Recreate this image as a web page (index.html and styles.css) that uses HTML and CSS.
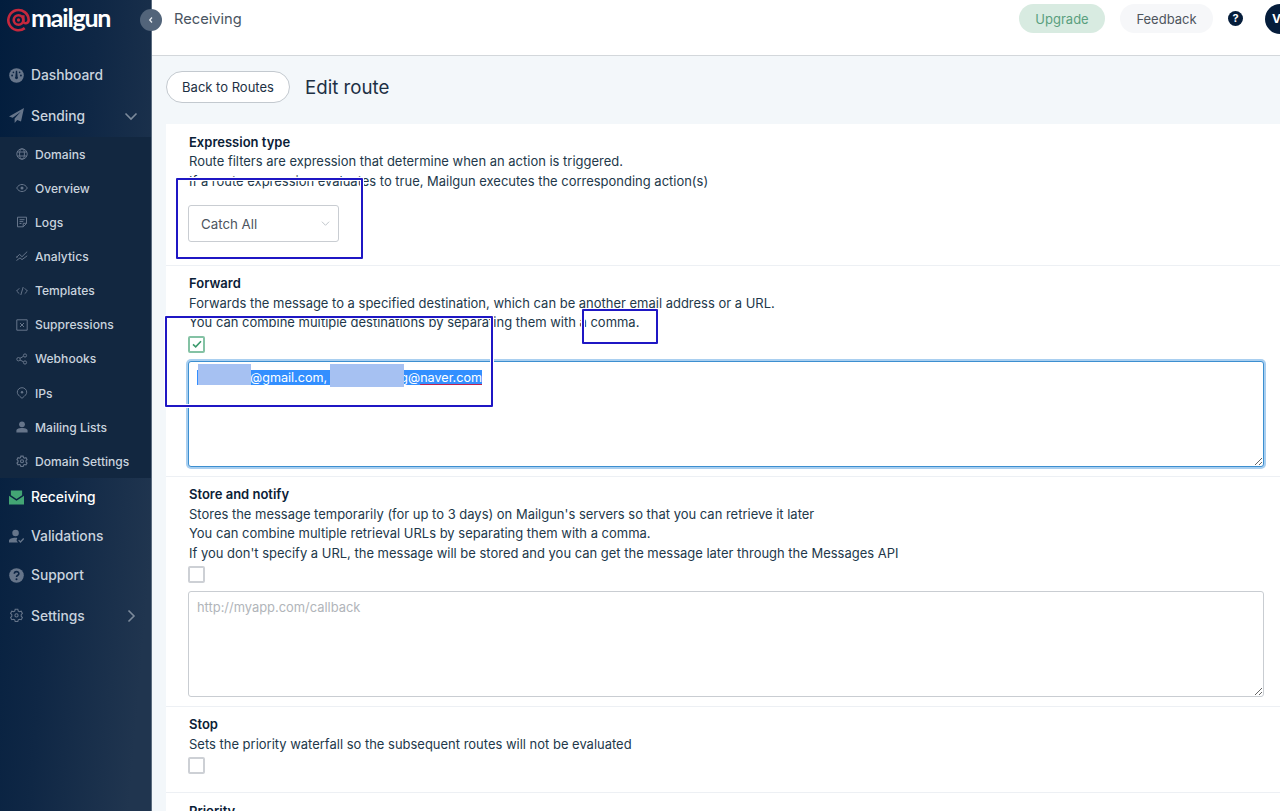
FILE: index.html
```html
<!DOCTYPE html>
<html lang="en">
<head>
    <meta charset="UTF-8">
    <meta name="viewport" content="width=device-width, initial-scale=1.0">
    <title>Mailgun - Edit route</title>
    <link rel="stylesheet" href="styles.css">
</head>
<body>
    <div class="app">
        <aside class="sidebar">
            <div class="logo">
                <svg class="logo-mark" viewBox="0 0 24 24" fill="none" stroke="#c5283d" stroke-width="2.7">
                    <circle cx="12" cy="12" r="5"/>
                    <path d="M17 7v6c0 3.5 5.6 3 5.6-1A10.6 10.6 0 1 0 18.5 20.5"/>
                    <circle cx="12" cy="12" r="1.7" fill="#c5283d" stroke="none"/>
                </svg>
                <span class="logo-text">mailgun</span>
            </div>
            <button class="collapse">
                <svg viewBox="0 0 8 8" fill="none" stroke="#e8edf2" stroke-width="1.3"><path d="M5 1.5 2.7 4 5 6.5"/></svg>
            </button>

            <nav>
                <a class="nav-item">
                    <svg class="icon" viewBox="0 0 16 16"><circle cx="8" cy="8" r="7.8" fill="#66758a"/><g fill="#0c2443"><path d="M7.3 3h1.4l.5 6.2a1.6 1.6 0 1 1-2.4 0z"/><circle cx="3.3" cy="8" r="1"/><circle cx="12.7" cy="8" r="1"/><circle cx="4.7" cy="4.6" r=".9"/><circle cx="11.3" cy="4.6" r=".9"/></g></svg>
                    Dashboard
                </a>
                <a class="nav-item tall">
                    <svg class="icon" viewBox="0 0 16 16" fill="#66758a"><path d="M16 0 0 9l4 1.5L12.5 4 6 11.3V16l2.8-3.2 4 1.7z"/></svg>
                    Sending
                    <svg class="chevron" viewBox="0 0 14 14"><path d="m1.5 4.5 5.5 5.5 5.5-5.5"/></svg>
                </a>
                <div class="submenu">
                    <a class="sub-item"><svg class="sub-icon" viewBox="0 0 12 12"><circle cx="6" cy="6" r="5.2"/><ellipse cx="6" cy="6" rx="2.4" ry="5.2"/><path d="M1.2 4h9.6M1.2 8h9.6"/></svg>Domains</a>
                    <a class="sub-item"><svg class="sub-icon" viewBox="0 0 12 12"><path d="M.7 6C3.2 1.3 8.8 1.3 11.3 6 8.8 10.7 3.2 10.7.7 6z"/><circle class="solid" cx="6" cy="6" r="1.5"/></svg>Overview</a>
                    <a class="sub-item"><svg class="sub-icon" viewBox="0 0 12 12"><path d="M1.5 1.2h9v6.3l-3.3 3.3H1.5zM10.5 7.3H7.2v3.5M3.5 3.7h5M3.5 5.6h3.8M3.5 7.5h2"/></svg>Logs</a>
                    <a class="sub-item"><svg class="sub-icon" viewBox="0 0 12 12"><path d="m.5 7.3 3.2-3 2.2 2.5 5.3-5.2M.5 10.5l3.5-2.6 2 1.7 5.2-3.8"/><circle class="solid" cx="1" cy="7" r=".8"/></svg>Analytics</a>
                    <a class="sub-item"><svg class="sub-icon" viewBox="0 0 12 12"><path d="M3.3 3.3.6 6l2.7 2.7M8.7 3.3 11.4 6 8.7 8.7M7.2 2 4.8 10"/></svg>Templates</a>
                    <a class="sub-item"><svg class="sub-icon" viewBox="0 0 12 12"><path d="M.8.8h10.4v10.4H.8zM4 4l4 4M8 4 4 8"/></svg>Suppressions</a>
                    <a class="sub-item"><svg class="sub-icon" viewBox="0 0 12 12"><circle cx="2.5" cy="6.2" r="1.7"/><circle cx="9" cy="2.5" r="1.6"/><circle cx="9" cy="9.5" r="1.6"/><path d="m4 5.3 3.5-2M4 7l3.5 1.8"/></svg>Webhooks</a>
                    <a class="sub-item"><svg class="sub-icon" viewBox="0 0 12 12"><path d="M6 11.3C2.7 8.6 1.3 7.2 1.3 5.2a4.7 4.5 0 0 1 9.4 0c0 2-1.4 3.4-4.7 6.1z"/><circle class="solid" cx="6" cy="5.2" r="1.2"/></svg>IPs</a>
                    <a class="sub-item"><svg class="sub-icon" viewBox="0 0 12 12"><path class="solid" d="M.4 11.5V9.7c0-2 2.5-2.8 5.6-2.8s5.6.8 5.6 2.8v1.8z"/><circle class="solid" cx="6" cy="3.3" r="2.9"/></svg>Mailing Lists</a>
                    <a class="sub-item"><svg class="sub-icon gear" viewBox="0 0 16 16"><path d="m6.5 1.5-.5 2-1.3.7-2-.6-1.4 2.5 1.4 1.5v1.7L1.3 10.8l1.4 2.4 2-.5 1.3.7.5 2h3l.5-2 1.3-.7 2 .5 1.4-2.4-1.4-1.5V7.6l1.4-1.5-1.4-2.5-2 .6-1.3-.7-.5-2z"/><circle cx="8" cy="8.4" r="2"/></svg>Domain Settings</a>
                </div>
                <a class="nav-item active">
                    <svg class="icon" viewBox="0 0 16 16" fill="#43a574"><path d="M2 .5h12v5.2L8 9.6 2 5.7z"/><path d="m0 6.2 8 5.2 8-5.2v9.3H0z"/></svg>
                    Receiving
                </a>
                <a class="nav-item">
                    <svg class="icon" viewBox="0 0 16 16" fill="#66758a"><circle cx="7" cy="4.3" r="3.5"/><path d="M0 14.5v-2c0-2 3-3.2 7-3.2.8 0 1.3 0 1.8.2L8 12l1.5 2.5z"/><path d="m10.3 11.9 1.9 1.9 3.5-3.7" fill="none" stroke="#66758a" stroke-width="1.4"/></svg>
                    Validations
                </a>
                <a class="nav-item">
                    <svg class="icon" viewBox="0 0 16 16"><circle cx="8" cy="8" r="7.8" fill="#66758a"/><path d="M5.7 6.2c0-3.1 4.8-3 4.8-.2C10.5 7.8 8 7.7 8 9.7" fill="none" stroke="#0c2443" stroke-width="1.7"/><circle cx="8" cy="12" r="1.1" fill="#0c2443"/></svg>
                    Support
                </a>
                <a class="nav-item tall">
                    <svg class="icon outline" viewBox="0 0 16 17"><path d="m6.5 1.5-.5 2-1.3.7-2-.6-1.4 2.5 1.4 1.5v1.7L1.3 10.8l1.4 2.4 2-.5 1.3.7.5 2h3l.5-2 1.3-.7 2 .5 1.4-2.4-1.4-1.5V7.6l1.4-1.5-1.4-2.5-2 .6-1.3-.7-.5-2z"/><circle cx="8" cy="8.4" r="1.8"/></svg>
                    Settings
                    <svg class="chevron" viewBox="0 0 14 14"><path d="m4.5 1.5 5.5 5.5-5.5 5.5"/></svg>
                </a>
            </nav>
        </aside>

        <main class="main">
            <header class="topbar">
                <span class="section-name">Receiving</span>
                <div class="top-actions">
                    <button class="pill upgrade">Upgrade</button>
                    <button class="pill feedback">Feedback</button>
                    <span class="help">?</span>
                    <span class="avatar">V</span>
                </div>
            </header>

            <div class="page-head">
                <button class="back">Back to Routes</button>
                <h1>Edit route</h1>
            </div>

            <div class="card">
                <section class="row expression">
                    <h2>Expression type</h2>
                    <p>Route filters are expression that determine when an action is triggered.</p>
                    <p>If a route expression evaluates to true, Mailgun executes the corresponding action(s)</p>
                    <div class="select">
                        Catch All
                        <svg viewBox="0 0 10 10"><path d="M1 3l4 4 4-4"/></svg>
                    </div>
                </section>

                <section class="row forward">
                    <h2>Forward</h2>
                    <p>Forwards the message to a specified destination, which can be another email address or a URL.</p>
                    <p>You can combine multiple destinations by separating them with a comma.</p>
                    <span class="check checked"><svg viewBox="0 0 12 12"><path d="m2 6.3 2.7 2.5L10 3.2"/></svg></span>
                    <div class="field focused">
                        <div class="selection">
                            <span class="mail-first">@gmail.com,</span>
                            <span class="mail-second">g@<u>naver.com</u></span>
                            <span class="mask mask-first"></span>
                            <span class="mask mask-second"></span>
                        </div>
                    </div>
                </section>

                <section class="row store">
                    <h2>Store and notify</h2>
                    <p>Stores the message temporarily (for up to 3 days) on Mailgun's servers so that you can retrieve it later</p>
                    <p>You can combine multiple retrieval URLs by separating them with a comma.</p>
                    <p>If you don't specify a URL, the message will be stored and you can get the message later through the Messages API</p>
                    <span class="check"></span>
                    <textarea class="field" placeholder="http://myapp.com/callback"></textarea>
                </section>

                <section class="row stop">
                    <h2>Stop</h2>
                    <p>Sets the priority waterfall so the subsequent routes will not be evaluated</p>
                    <span class="check"></span>
                </section>

                <section class="row">
                    <h2>Priority</h2>
                </section>
            </div>
        </main>

        <!-- highlight frames -->
        <div class="frame frame-select"></div>
        <div class="frame frame-forward"></div>
        <div class="frame frame-comma"></div>
    </div>
</body>
</html>
```

FILE: styles.css
```css
* {
    box-sizing: border-box;
}

body {
    margin: 0;
    font-family: Inter, "Liberation Sans", sans-serif;
    font-size: 13px;
    color: #22384a;
    background-color: #f3f7fa;
}

button {
    font-family: inherit;
    cursor: pointer;
}

.app {
    position: relative;
    display: flex;
    width: 100%;
    height: 811px;
    overflow: hidden;
}

/* sidebar */
.sidebar {
    position: relative;
    flex: 0 0 152px;
    border-right: 1px solid #5b6c7f;
    background: linear-gradient(95deg, #021d3d 0%, #0f2745 45%, #20354f 90%);
}

.logo {
    display: flex;
    height: 56px;
    padding: 8px 0 0 7px;
}

.logo-mark {
    width: 23px;
    height: 24px;
}

.logo-text {
    margin: -5px 0 0 1px;
    font-family: Lato, sans-serif;
    font-size: 25px;
    font-weight: 700;
    line-height: 28px;
    letter-spacing: -1.2px;
    color: #fff;
}

.collapse {
    position: absolute;
    top: 9px;
    right: -11px;
    z-index: 2;
    display: flex;
    align-items: center;
    justify-content: center;
    width: 22px;
    height: 22px;
    padding: 0;
    border: none;
    border-radius: 50%;
    background-color: #52647a;
}

.collapse svg {
    width: 8px;
    height: 8px;
}

.nav-item {
    display: flex;
    align-items: center;
    height: 39px;
    padding: 0 13px 1px 9px;
    font-size: 13.8px;
    font-weight: 500;
    color: #c9d3de;
}

.nav-item.tall {
    height: 42px;
}

.nav-item.active {
    color: #fff;
}

.icon {
    width: 15px;
    height: 15px;
    margin-right: 7px;
}

.outline {
    fill: none;
    stroke: #66758a;
    stroke-width: 1.2;
}

.chevron {
    width: 14px;
    height: 14px;
    margin-left: auto;
    fill: none;
    stroke: #7d8b9c;
    stroke-width: 1.6;
}

.submenu {
    background-color: #122740;
}

.sub-item {
    display: flex;
    align-items: center;
    height: 34.15px;
    padding-left: 16px;
    font-size: 12.1px;
    font-weight: 500;
    color: #c9d3de;
}

.sub-icon {
    width: 12px;
    height: 12px;
    margin-right: 7px;
    fill: none;
    stroke: #66758a;
    stroke-width: 1;
}

.gear {
    stroke-width: 1.5;
}

.sub-icon .solid {
    fill: #66758a;
    stroke: none;
}

/* header */
.main {
    flex: 1;
    min-width: 0;
}

.topbar {
    display: flex;
    justify-content: space-between;
    height: 56px;
    padding: 4px 0 0 22px;
    border-bottom: 1px solid #d3d7db;
    background-color: #fff;
}

.section-name {
    font-size: 14.7px;
    line-height: 30px;
    color: #4a5562;
}

.top-actions {
    display: flex;
    align-items: center;
    height: 29px;
    margin-right: -15px;
}

.pill {
    height: 29px;
    padding: 0;
    border: none;
    border-radius: 15px;
    font-size: 13px;
}

.upgrade {
    width: 86px;
    margin-right: 15px;
    color: #5a9f7e;
    background-color: #d8ebe1;
}

.feedback {
    width: 93px;
    margin-right: 15px;
    color: #4e555d;
    background-color: #f6f7f9;
}

.help {
    width: 15px;
    height: 15px;
    margin-right: 22px;
    border-radius: 50%;
    font-size: 11px;
    font-weight: 700;
    line-height: 15px;
    text-align: center;
    color: #fff;
    background-color: #051d3b;
}

.avatar {
    width: 30px;
    height: 30px;
    padding-left: 7px;
    border-radius: 50%;
    font-size: 12px;
    font-weight: 700;
    line-height: 30px;
    color: #fff;
    background-color: #051d3b;
}

.page-head {
    display: flex;
    align-items: center;
    height: 68px;
    padding: 0 0 6px 14px;
}

.back {
    width: 124px;
    height: 32px;
    padding: 0 0 1px;
    border: 1px solid #c3c9cf;
    border-radius: 16px;
    font-size: 13px;
    color: #1d3044;
    background-color: #fff;
}

h1 {
    margin: 0 0 0 15px;
    font-size: 18.7px;
    font-weight: 400;
    color: #1d3044;
}

/* form */
.card {
    margin-left: 14px;
    background-color: #fff;
}

.row {
    padding: 8.5px 16px 0 23px;
    border-bottom: 1px solid #edf0f4;
}

.expression {
    height: 142px;
}

.forward {
    height: 211px;
}

.store {
    height: 230px;
}

.stop {
    height: 86px;
}

.forward,
.store,
.stop {
    padding-top: 8px;
}

h2,
p {
    margin: 0;
    font-size: 12.98px;
    line-height: 19.5px;
    white-space: nowrap;
}

h2 {
    font-size: 13px;
    font-weight: 600;
    color: #0a2036;
}

.select {
    display: flex;
    align-items: center;
    justify-content: space-between;
    width: 151px;
    height: 37px;
    margin: 14px 0 0 -1px;
    padding: 0 8px 0 12px;
    border: 1px solid #c9cdd2;
    border-radius: 3px;
    font-size: 13.3px;
    color: #4d5560;
}

.select svg {
    width: 9px;
    height: 9px;
    fill: none;
    stroke: #b9bfc6;
}

.check {
    display: block;
    width: 17px;
    height: 17px;
    margin: 3px 0 0 -1px;
    border: 2px solid #cdd0d5;
    border-radius: 2px;
    background-color: #fff;
}

.checked {
    border-color: #84c2a4;
}

.check svg {
    display: block;
    width: 12px;
    height: 12px;
    margin: 0.5px;
    fill: none;
    stroke: #3c9a6d;
    stroke-width: 1.6;
}

.field {
    display: block;
    width: 1076px;
    height: 106px;
    margin: 8px 0 0 -1px;
    padding: 6px 8px;
    border: 1px solid #c9cdd2;
    border-radius: 3px;
    outline: none;
    overflow: auto;
    resize: vertical;
    font-family: inherit;
    font-size: 12.9px;
    line-height: 19px;
    background-color: #fff;
}

.field::placeholder {
    color: #b1b5ba;
}

.focused {
    border-color: #3c8fd0;
    box-shadow: 0 0 0 2px #a9cff0;
}

.selection {
    position: relative;
    display: flex;
    align-items: center;
    width: 285px;
    height: 15px;
    margin-top: 2px;
    font-size: 12.6px;
    line-height: 15px;
    color: #fff;
    background-color: #338fff;
}

.mask {
    position: absolute;
    top: -6px;
    background-color: #a6c1f2;
}

.mask-first {
    left: 1px;
    width: 53px;
    height: 21px;
}

.mask-second {
    left: 133px;
    width: 74px;
    height: 23px;
}

.mail-first {
    margin-left: 53px;
}

.mail-second {
    margin-left: auto;
}

.mail-second u {
    text-decoration-color: #c0224f;
    text-decoration-skip-ink: none;
    text-underline-offset: 2px;
}

/* highlight frames */
.frame {
    position: absolute;
    border: 2px solid #1f17c4;
    border-radius: 1px;
    box-shadow: 0 0 0 1px #fff, inset 0 0 0 1px #fff;
}

.frame-select {
    left: 176px;
    top: 178px;
    width: 187px;
    height: 81px;
}

.frame-forward {
    left: 165px;
    top: 316px;
    width: 328px;
    height: 91px;
}

.frame-comma {
    left: 582px;
    top: 309px;
    width: 76px;
    height: 35px;
}
```
